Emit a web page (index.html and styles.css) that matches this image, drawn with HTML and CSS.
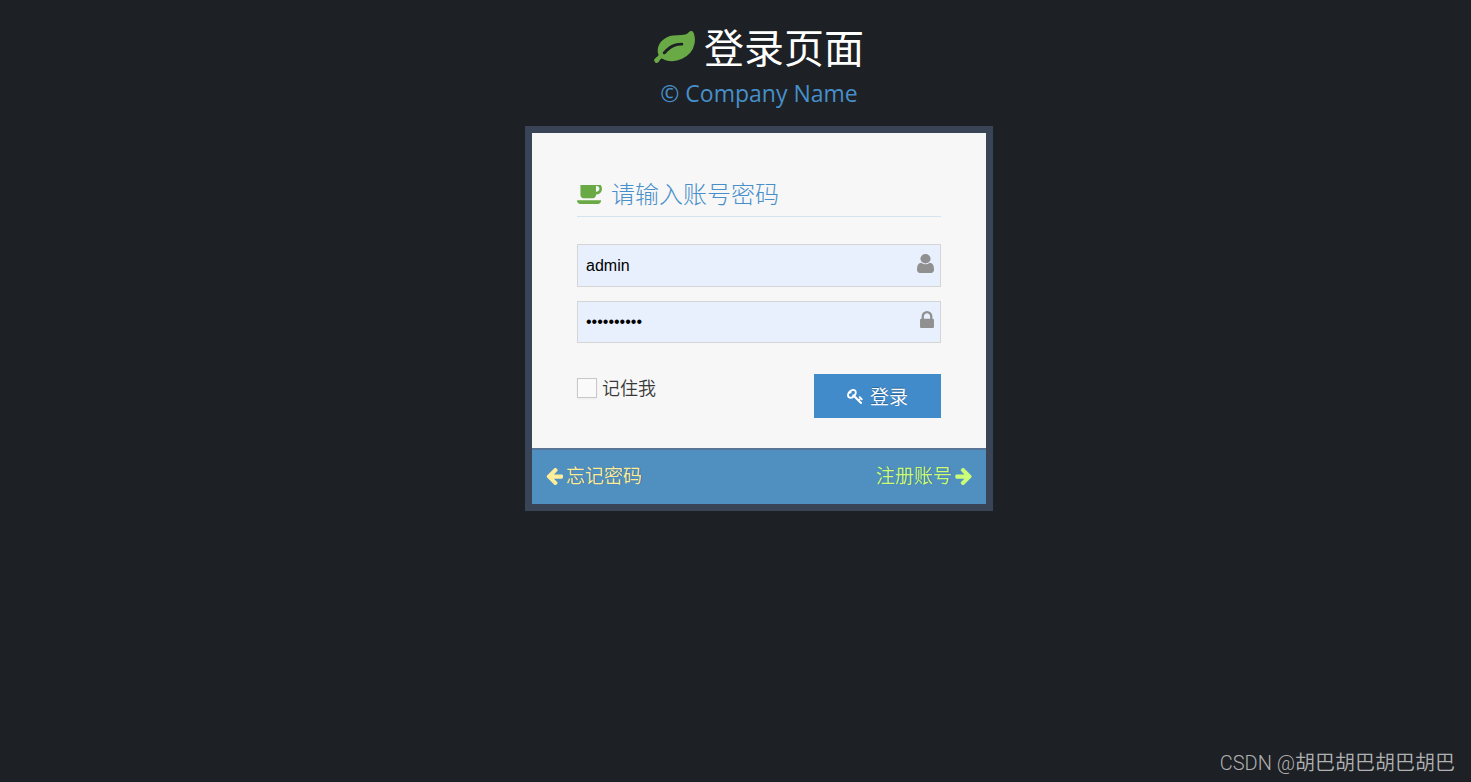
FILE: index.html
```html
<!DOCTYPE html>
<html lang="zh-CN">

<head>
    <meta charset="UTF-8">
    <meta name="viewport" content="width=device-width, initial-scale=1.0">
    <title>登录页面</title>
    <link rel="stylesheet" href="styles.css">
</head>

<body>

    <main class="login-container">
        <header class="brand">
            <h1>
                <svg class="icon-leaf" viewBox="0 128 1792 1536" aria-hidden="true"><path d="M1280 704q0-26-19-45t-45-19q-172 0-318 49.5t-259.5 134-235.5 219.5q-19 21-19 45 0 26 19 45t45 19q24 0 45-19 27-24 74-71t67-66q137-124 268.5-176t313.5-52q26 0 45-19t19-45zm512-198q0 95-20 193-46 224-184.5 383t-357.5 268q-214 108-438 108-148 0-286-47-15-5-88-42t-96-37q-16 0-39.5 32t-45 70-52.5 70-60 32q-43 0-63.5-17.5t-45.5-59.5q-2-4-6-11t-5.5-10-3-9.5-1.5-13.5q0-35 31-73.5t68-65.5 68-56 31-48q0-4-14-38t-16-44q-9-51-9-104 0-115 43.5-220t119-184.5 170.5-139 204-95.5q55-18 145-25.5t179.5-9 178.5-6 163.5-24 113.5-56.5l29.5-29.5 29.5-28 27-20 36.5-16 43.5-4.5q39 0 70.5 46t47.5 112 24 124 8 96z"/></svg>
                <span>登录页面</span>
            </h1>
            <h4>© Company Name</h4>
        </header>

        <div class="login-box">
            <form class="login-main" onsubmit="return false">
                <h2>
                    <svg class="icon-coffee" viewBox="0 384 1856 1280" preserveAspectRatio="none" aria-hidden="true"><path d="M1664 640q0-80-56-136t-136-56h-64v384h64q80 0 136-56t56-136zm-1664 768h1792q0 106-75 181t-181 75h-1280q-106 0-181-75t-75-181zm1856-768q0 159-112.5 271.5t-271.5 112.5h-64v32q0 92-66 158t-158 66h-704q-92 0-158-66t-66-158v-736q0-26 19-45t45-19h1152q159 0 271.5 112.5t112.5 271.5z"/></svg>
                    <span>请输入账号密码</span>
                </h2>

                <div class="field">
                    <input type="text" value="admin" aria-label="账号">
                    <svg class="icon-user" viewBox="256 128 1280 1536" preserveAspectRatio="none" aria-hidden="true"><path d="M1536 1399q0 109-62.5 187t-150.5 78h-854q-88 0-150.5-78t-62.5-187q0-85 8.5-160.5t31.5-152 58.5-131 94-89 134.5-34.5q131 128 313 128t313-128q76 0 134.5 34.5t94 89 58.5 131 31.5 152 8.5 160.5zm-256-887q0 159-112.5 271.5t-271.5 112.5-271.5-112.5-112.5-271.5 112.5-271.5 271.5-112.5 271.5 112.5 112.5 271.5z"/></svg>
                </div>
                <div class="field">
                    <input type="password" value="admin12345" aria-label="密码">
                    <svg class="icon-lock" viewBox="320 128 1152 1408" aria-hidden="true"><path d="M640 768h512v-192q0-106-75-181t-181-75-181 75-75 181v192zm832 96v576q0 40-28 68t-68 28h-960q-40 0-68-28t-28-68v-576q0-40 28-68t68-28h32v-192q0-184 132-316t316-132 316 132 132 316v192h32q40 0 68 28t28 68z"/></svg>
                </div>

                <div class="actions">
                    <label class="remember">
                        <input type="checkbox">
                        <span>记住我</span>
                    </label>
                    <button type="submit">
                        <svg class="icon-key" viewBox="0 128 1683 1592" aria-hidden="true"><path d="M832 512q0-80-56-136t-136-56-136 56-56 136q0 42 19 83-41-19-83-19-80 0-136 56t-56 136 56 136 136 56 136-56 56-136q0-42-19-83 41 19 83 19 80 0 136-56t56-136zm851 704q0 17-49 66t-66 49q-9 0-28.5-16t-36.5-33-38.5-40-24.5-26l-96 96 220 220q28 28 28 68 0 42-39 81t-81 39q-40 0-68-28l-671-671q-176 131-365 131-163 0-265.5-102.5t-102.5-265.5q0-160 95-313t248-248 313-95q163 0 265.5 102.5t102.5 265.5q0 189-131 365l355 355 96-96q-3-3-26-24.5t-40-38.5-33-36.5-16-28.5q0-17 49-66t66-49q13 0 23 10 6 6 46 44.5t82 79.5 86.5 86 73 78 28.5 41z"/></svg>
                        <span>登录</span>
                    </button>
                </div>
            </form>

            <div class="toolbar">
                <a class="forgot" href="#">
                    <svg class="icon-arrow" viewBox="128 192 1536 1536" aria-hidden="true"><path d="M1664 896v128q0 53-32.5 90.5t-84.5 37.5h-704l293 294q38 36 38 90t-38 90l-75 76q-37 37-90 37-52 0-91-37l-651-652q-37-37-37-90 0-52 37-91l651-650q38-38 91-38 52 0 90 38l75 74q38 38 38 91t-38 91l-293 293h704q52 0 84.5 37.5t32.5 90.5z"/></svg>
                    <span>忘记密码</span>
                </a>
                <a class="signup" href="#">
                    <span>注册账号</span>
                    <svg class="icon-arrow" viewBox="96 192 1536 1536" aria-hidden="true"><path d="M1600 960q0 54-37 91l-651 651q-39 37-91 37-51 0-90-37l-75-75q-38-38-38-91t38-91l293-293h-704q-52 0-84.5-37.5t-32.5-90.5v-128q0-53 32.5-90.5t84.5-37.5h704l-293-294q-38-36-38-90t38-90l75-75q38-38 90-38 53 0 91 38l651 651q37 35 37 90z"/></svg>
                </a>
            </div>
        </div>
    </main>

    <footer class="watermark">CSDN @胡巴胡巴胡巴胡巴</footer>

</body>

</html>
```
FILE: styles.css
```css
* {
    box-sizing: border-box;
}

body {
    display: flex;
    flex-direction: column;
    min-height: 100vh;
    margin: 0;
    background: #1d2024;
    font-family: "Open Sans", "Noto Sans CJK SC", sans-serif;
    color: #393939;
}

h1,
h2,
h4 {
    margin: 0;
    font-weight: normal;
}

svg {
    flex: none;
    fill: currentColor;
}

.login-container {
    display: flex;
    flex-direction: column;
    align-items: center;
    padding: 24px 0 0 47px;
}

.brand h1 {
    display: flex;
    align-items: center;
    justify-content: center;
    gap: 9px;
    height: 48px;
    font-size: 40px;
    line-height: 48px;
    color: #ffffff;
}

.icon-leaf {
    width: 41px;
    height: 35px;
    color: #69aa46;
}

.brand h4 {
    height: 54px;
    padding-top: 5px;
    font-size: 23px;
    line-height: 32px;
    text-align: center;
    color: #478fca;
}

.login-box {
    width: 468px;
    max-width: 100%;
    border: 7px solid #394557;
    background: #f7f7f7;
}

.login-main {
    padding: 44px 45px 30px;
}

.login-main h2 {
    display: flex;
    align-items: center;
    gap: 9px;
    margin-bottom: 27px;
    padding-bottom: 5px;
    border-bottom: 1px solid #d5e3ef;
    font-size: 24px;
    font-weight: 300;
    line-height: 34px;
    color: #478fca;
}

.icon-coffee {
    width: 25px;
    height: 19px;
    color: #69aa46;
}

.field {
    position: relative;
    margin-bottom: 14px;
}

.field input {
    display: block;
    width: 100%;
    height: 43px;
    padding: 1px 32px 0 8px;
    border: 1px solid #d5d5d5;
    border-radius: 0;
    background: #e8f0fe;
    font-family: "Liberation Sans", Arial, sans-serif;
    font-size: 16px;
    color: #000000;
}

.field input[type="password"] {
    height: 42px;
    padding-top: 0;
}

.field svg {
    position: absolute;
    top: 10px;
    right: 7px;
    color: #909090;
}

.icon-user {
    width: 17px;
    height: 19px;
}

.icon-lock {
    width: 14px;
    height: 17px;
}

.actions {
    display: flex;
    align-items: flex-start;
    justify-content: space-between;
    padding-top: 17px;
}

.remember {
    display: flex;
    align-items: center;
    gap: 5px;
    font-size: 18px;
    font-weight: 350;
    line-height: 28px;
}

.remember input {
    appearance: none;
    width: 20px;
    height: 20px;
    margin: 0;
    border: 1px solid #c8c8c8;
    background: #fafafa;
    box-shadow: 0 1px 2px rgba(0, 0, 0, 0.05);
}

.remember input:checked {
    background: #478fca;
}

button {
    display: flex;
    align-items: center;
    justify-content: center;
    gap: 7px;
    width: 127px;
    height: 44px;
    border: 0;
    background: #428bca;
    font-family: inherit;
    font-size: 19px;
    font-weight: 350;
    color: #ffffff;
    text-shadow: 0 -1px 0 rgba(0, 0, 0, 0.25);
    cursor: pointer;
}

button:hover {
    background: #1b6aaa;
}

.icon-key {
    width: 16px;
    height: 15px;
}

.toolbar {
    display: flex;
    align-items: center;
    justify-content: space-between;
    height: 56px;
    padding: 0 14px 2px;
    border-top: 2px solid #597597;
    background: #5090c1;
}

.toolbar a {
    display: flex;
    align-items: center;
    gap: 3px;
    font-size: 19px;
    font-weight: 350;
    line-height: 28px;
    text-decoration: none;
    text-shadow: 1px 0 1px rgba(0, 0, 0, 0.25);
}

.toolbar a:hover {
    text-decoration: underline;
}

.toolbar .forgot {
    color: #ffee99;
}

.toolbar .signup {
    color: #ccff77;
}

.icon-arrow {
    width: 17px;
    height: 17px;
}

.watermark {
    margin-top: auto;
    padding: 0 16px 5px;
    font-family: Roboto, "Noto Sans CJK SC", sans-serif;
    font-size: 20px;
    font-weight: 350;
    line-height: 28px;
    text-align: right;
    color: #b0b1b2;
}
```
